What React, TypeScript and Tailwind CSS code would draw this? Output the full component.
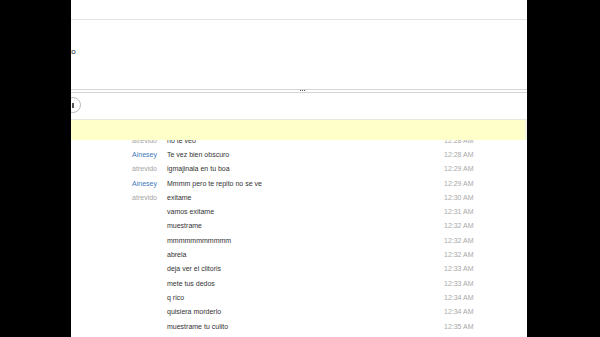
import React from 'react';

interface ChatRow {
  name?: string;
  isMe?: boolean;
  text: string;
  time: string;
}

const rows: ChatRow[] = [
  { name: 'atrevido', text: 'no te veo', time: '12:28 AM' },
  { name: 'Ainesey', isMe: true, text: 'Te vez bien obscuro', time: '12:28 AM' },
  { name: 'atrevido', text: 'igmajinala en tu boa', time: '12:29 AM' },
  { name: 'Ainesey', isMe: true, text: 'Mmmm pero te repito no se ve', time: '12:29 AM' },
  { name: 'atrevido', text: 'exitame', time: '12:30 AM' },
  { text: 'vamos exitame', time: '12:31 AM' },
  { text: 'muestrame', time: '12:32 AM' },
  { text: 'mmmmmmmmmmm', time: '12:32 AM' },
  { text: 'abrela', time: '12:32 AM' },
  { text: 'deja ver el clitoris', time: '12:33 AM' },
  { text: 'mete tus dedos', time: '12:33 AM' },
  { text: 'q rico', time: '12:34 AM' },
  { text: 'quisiera morderlo', time: '12:34 AM' },
  { text: 'muestrame tu culito', time: '12:35 AM' },
];

function App() {
  return (
    <div
      className="flex w-[600px] h-[337px] bg-black overflow-hidden"
      style={{ fontFamily: '"Liberation Sans", Arial, sans-serif' }}
    >
      {/* left letterbox */}
      <div className="w-[71px] shrink-0 bg-black" />

      {/* skype window */}
      <div className="w-[456px] shrink-0 bg-white flex flex-col overflow-hidden">
        <div className="h-[19px] shrink-0" />
        <div className="h-px shrink-0 bg-[#e2e2e2]" />

        {/* profile area */}
        <div className="h-[69px] shrink-0 flex items-start pt-[28px]">
          <span className="-ml-[2px] text-[8px] leading-none text-[#222]">to</span>
        </div>

        {/* splitter */}
        <div className="relative shrink-0 flex flex-col">
          <div className="h-px bg-[#d4d4d4]" />
          <div className="h-[2px]" />
          <div className="h-px bg-[#d4d4d4]" />
          <div className="absolute left-[229px] top-[1px] flex gap-px">
            <span className="w-px h-px bg-[#555]" />
            <span className="w-px h-px bg-[#555]" />
            <span className="w-px h-px bg-[#555]" />
          </div>
        </div>

        {/* toolbar */}
        <div className="h-[26px] shrink-0 flex items-center">
          <div className="-ml-[6px] mt-[-2px] w-[16px] h-[16px] rounded-full border border-[#bcbcbc] flex items-center justify-center">
            <span className="w-[2px] h-[5px] bg-[#555]" />
          </div>
        </div>
        <div className="h-px shrink-0 bg-[#e8e8e0]" />

        {/* notice bar */}
        <div className="h-[20px] shrink-0 bg-[#ffffc9] border-r-2 border-r-[#f4f4e6]" />

        {/* chat history */}
        <div className="flex-1 overflow-hidden">
          <div className="-mt-[7px] flex flex-col">
            {rows.map((r, i) => (
              <div key={i} className="h-[14.3px] flex items-center text-[7px] leading-none">
                <div
                  className={`w-[86px] shrink-0 text-right ${r.isMe ? 'text-[#3f78b8]' : 'text-[#a4a4a4]'}`}
                >
                  {r.name ?? ''}
                </div>
                <div className="w-[10px] shrink-0" />
                <div className="w-[277px] shrink-0 text-[#333]">{r.text}</div>
                <div className="text-[#a8a8a8]">{r.time}</div>
              </div>
            ))}
          </div>
        </div>
      </div>

      {/* right letterbox */}
      <div className="flex-1 bg-black" />
    </div>
  );
}

export default App;
